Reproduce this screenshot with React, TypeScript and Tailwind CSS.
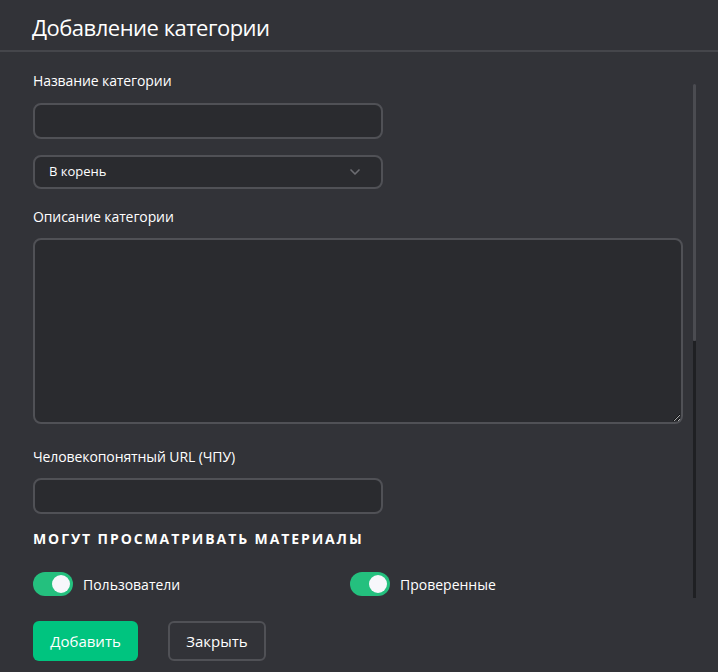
import { ChevronDown } from "lucide-react";

type ToggleProps = {
  label: string;
};

function Toggle({ label }: ToggleProps) {
  return (
    <label className="flex items-center gap-[10px]">
      <span className="flex h-6 w-10 items-center justify-end rounded-full bg-[#24c07e] px-[3px]">
        <span className="h-[18px] w-[18px] rounded-full bg-[#f7f7fb]" />
      </span>
      <span className="text-[14px] text-white">{label}</span>
    </label>
  );
}

export default function App() {
  return (
    <div
      className="flex h-[672px] w-[718px] flex-col overflow-hidden bg-[#323338] text-white"
      style={{ fontFamily: '"Open Sans", "Noto Sans", sans-serif' }}
    >
      <div className="flex h-[52px] shrink-0 items-center border-b-2 border-[#45464b] px-8 pt-[4px]">
        <h1 className="text-[22px] tracking-[-0.5px]">Добавление категории</h1>
      </div>

      <div className="relative h-[546px] shrink-0 overflow-hidden">
        <div className="flex flex-col pl-[33px] pr-[35px] pt-[18px]">
          <div className="text-[14px] tracking-[-0.1px]">Название категории</div>
          <input
            className="mt-[12px] h-[36px] w-[350px] rounded-lg border-2 border-[#505156] bg-[#2a2b2f] px-3 outline-none"
            type="text"
          />

          <div className="mt-[16px] flex h-[34px] w-[350px] items-center justify-between rounded-lg border-2 border-[#505156] bg-[#2a2b2f] pl-[14px] pr-[18px]">
            <span className="text-[13px]">В корень</span>
            <ChevronDown size={16} strokeWidth={2.5} className="text-[#6c6d72]" />
          </div>

          <div className="mt-[17px] text-[14px] tracking-[-0.1px]">Описание категории</div>
          <textarea className="mt-[11px] h-[186px] w-[650px] rounded-lg border-2 border-[#505156] bg-[#2a2b2f] outline-none" />

          <div className="mt-[22px] text-[14px] tracking-[-0.1px]">Человекопонятный URL (ЧПУ)</div>
          <input
            className="mt-[11px] h-[36px] w-[350px] rounded-lg border-2 border-[#505156] bg-[#2a2b2f] px-3 outline-none"
            type="text"
          />

          <div className="mt-[14px] text-[14px] font-bold tracking-[1.9px]">
            МОГУТ ПРОСМАТРИВАТЬ МАТЕРИАЛЫ
          </div>

          <div className="mt-[23px] flex">
            <div className="w-[317px]">
              <Toggle label="Пользователи" />
            </div>
            <Toggle label="Проверенные" />
          </div>
        </div>

        <div className="absolute right-[22px] top-[32px] flex h-[514px] w-[3px] flex-col">
          <div className="h-[257px] rounded-full bg-[#4b4c51]" />
          <div className="flex-1 bg-[#1f2023]" />
        </div>
      </div>

      <div className="flex gap-[30px] px-[33px] pt-[23px]">
        <button className="h-10 w-[105px] rounded-md bg-[#00c47f] text-[15px] text-white">
          Добавить
        </button>
        <button className="h-10 w-[98px] rounded-md border-2 border-[#505156] text-[15px] text-white">
          Закрыть
        </button>
      </div>
    </div>
  );
}
